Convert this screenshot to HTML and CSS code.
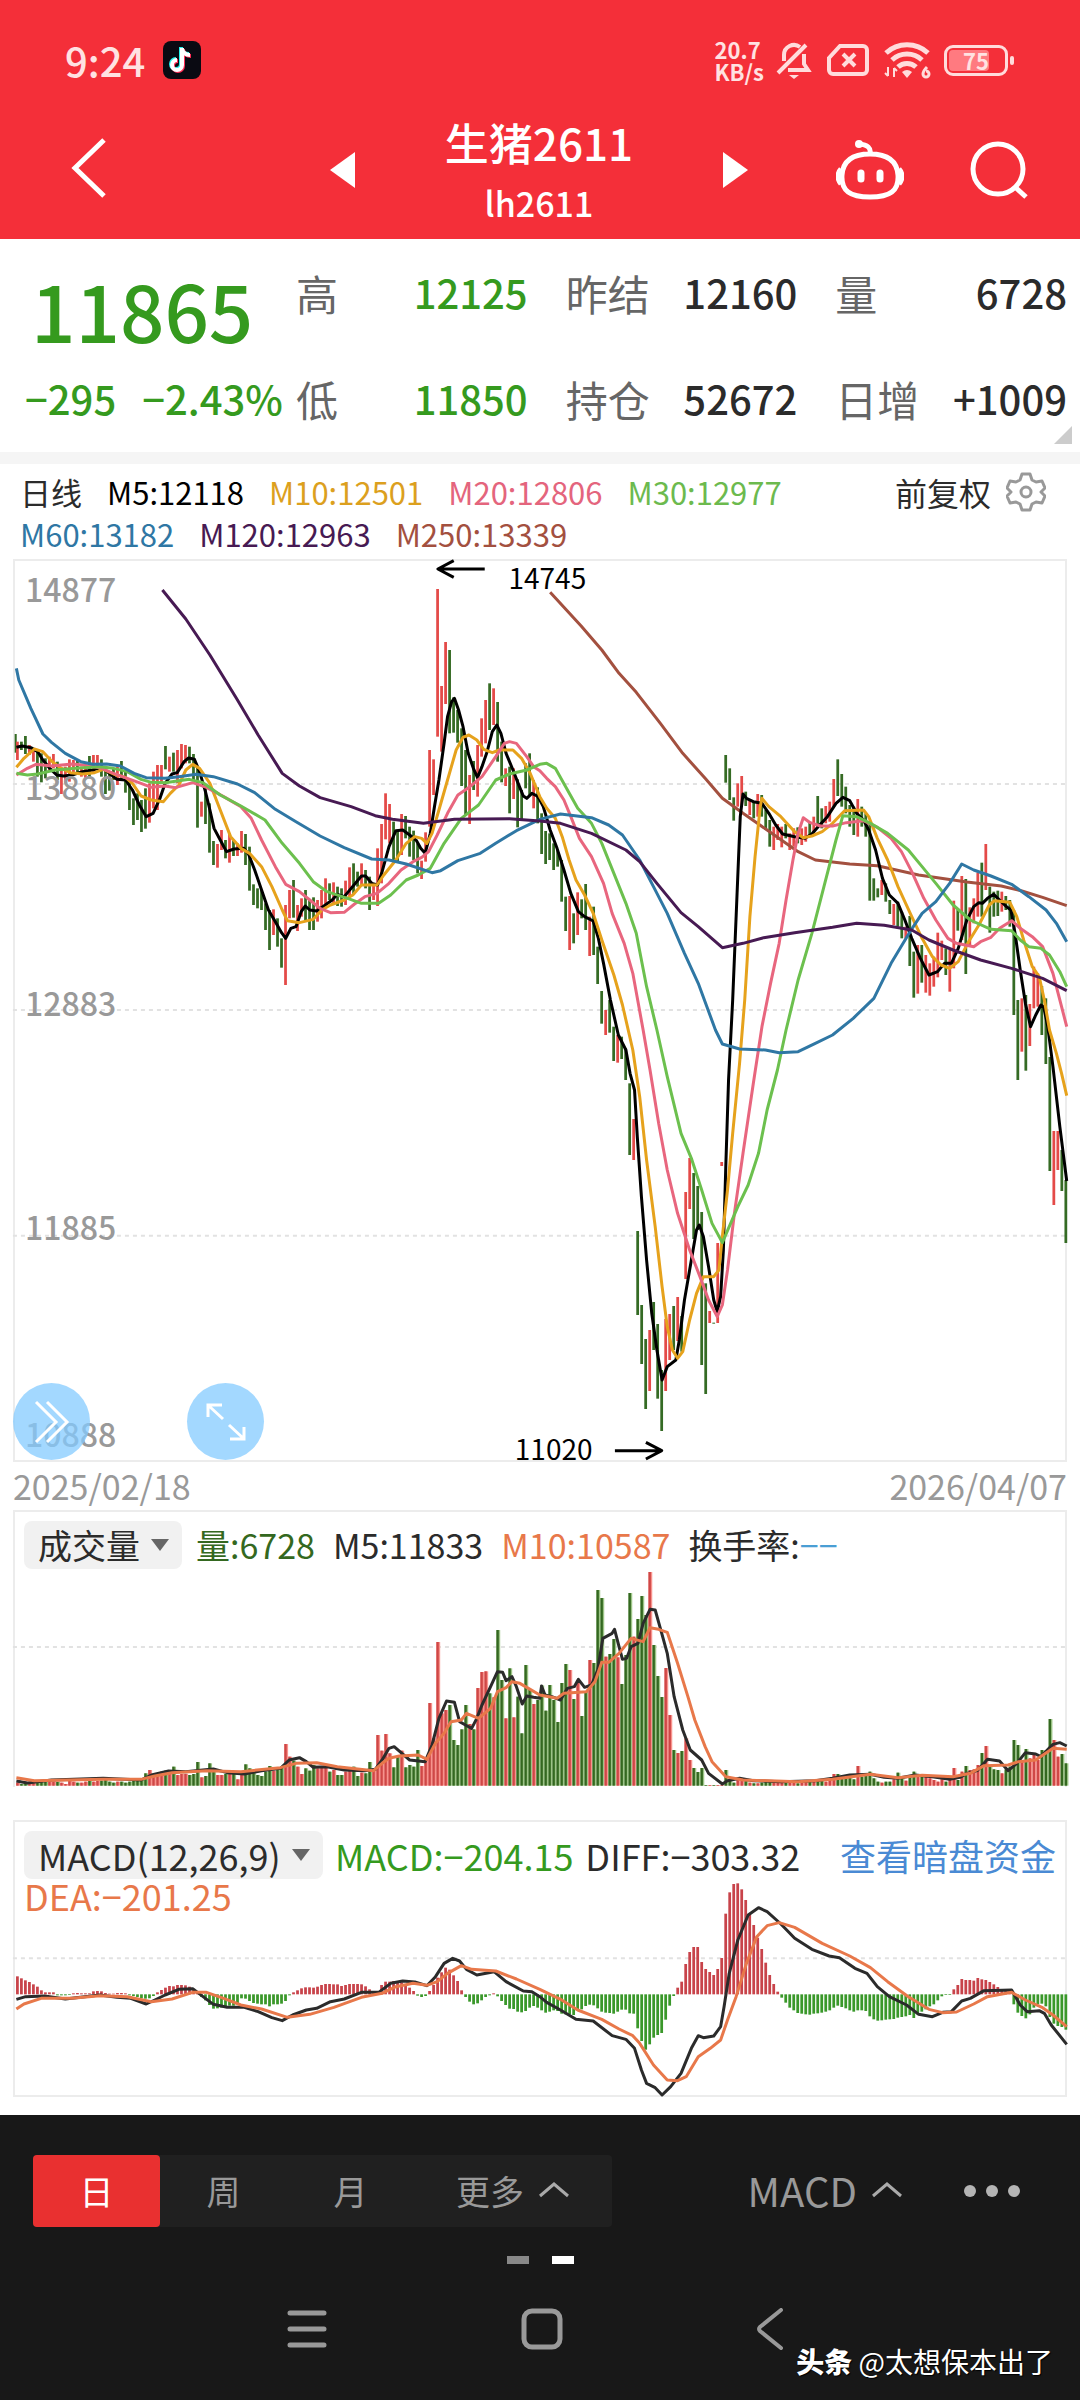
FILE: index.html
```html
<!DOCTYPE html>
<html lang="zh-CN">
<head>
<meta charset="utf-8">
<meta name="viewport" content="width=device-width, initial-scale=1">
<title>生猪2611</title>
<link rel="stylesheet" href="styles.css">
</head>
<body>
<header class="top">
  <div class="status">
    <span class="clock">9:24</span>
    <svg class="app-icon" width="38" height="38" viewBox="0 0 38 38" aria-hidden="true">
      <rect width="38" height="38" rx="8" fill="#0a0a12"/>
      <g fill="none" stroke-width="4">
        <path d="M19 7v17a5 5 0 1 1-5-5M19 8c1 4 4 6 8 6" stroke="#25f4ee" transform="translate(-1 -1)"/>
        <path d="M19 7v17a5 5 0 1 1-5-5M19 8c1 4 4 6 8 6" stroke="#fe2c55" transform="translate(1 1)"/>
        <path d="M19 7v17a5 5 0 1 1-5-5M19 8c1 4 4 6 8 6" stroke="#fff"/>
      </g>
    </svg>
    <span class="speed"><span>20.7</span><span>KB/s</span></span>
    <svg class="st-bell" width="36" height="38" viewBox="0 0 36 38" fill="none" stroke="#ffdcdc" stroke-width="4" aria-hidden="true">
      <path d="M8 20V14a10 10 0 0 1 16-8M28 13v10l4 6H12M30 4 2 32"/><path d="M13 34h10l-5 4z" fill="#ffdcdc" stroke="none"/>
    </svg>
    <svg class="st-sim" width="42" height="32" viewBox="0 0 42 32" fill="none" stroke="#ffdcdc" stroke-width="4" aria-hidden="true">
      <path d="M13 2h23a4 4 0 0 1 4 4v20a4 4 0 0 1-4 4H6a4 4 0 0 1-4-4V14z"/><path d="m16 10 12 12m0-12L16 22"/>
    </svg>
    <svg class="st-wifi" width="48" height="38" viewBox="0 0 48 38" fill="none" stroke="#ffdcdc" stroke-width="5" aria-hidden="true">
      <path d="M2 12a31 31 0 0 1 42 0M8 19a22 22 0 0 1 30 0M14 26a13 13 0 0 1 18 0"/><path d="m23 37-5-6q5-4 10 0z" fill="#ffdcdc" stroke="none"/>
      <path d="M4 26v9m-3-3 3 3M10 36v-9m3 3-3-3" stroke-width="2"/><path d="M43 26q-4 4-4 7a3 3 0 1 0 3-3" stroke-width="3"/>
    </svg>
    <span class="battery"><i class="battery-fill"></i><b class="battery-num">75</b></span>
  </div>
  <div class="nav">
    <button class="icon-btn back" aria-label="返回"><svg width="36" height="62" viewBox="0 0 36 62" fill="none" stroke="#fff" stroke-width="5"><path d="M33 3 4 31l29 28"/></svg></button>
    <button class="icon-btn prev" aria-label="上一个"><svg width="25" height="36" viewBox="0 0 25 36"><path d="M25 0v36L0 18z" fill="#fff"/></svg></button>
    <h1 class="title">生猪2611<small>lh2611</small></h1>
    <button class="icon-btn next" aria-label="下一个"><svg width="25" height="36" viewBox="0 0 25 36"><path d="M0 0v36l25-18z" fill="#fff"/></svg></button>
    <button class="icon-btn robot" aria-label="智能助手"><svg width="68" height="62" viewBox="0 0 68 62" fill="none" stroke="#fff" stroke-width="5">
      <path d="M34 15C52 15 61 22 62 36 63 52 54 58 34 58S5 52 6 36C7 22 16 15 34 15zM5 30q-6 7 0 15M63 30q6 7 0 15M34 15q2-9-11-10"/><circle cx="23" cy="5" r="4" fill="#fff" stroke="none"/><path d="M25 34v6M44 34v6" stroke-width="7" stroke-linecap="round"/></svg></button>
    <button class="icon-btn search" aria-label="搜索"><svg width="58" height="60" viewBox="0 0 58 60" fill="none" stroke="#fff" stroke-width="5"><circle cx="28" cy="29" r="25"/><path d="m45 47 11 10"/></svg></button>
  </div>
</header>

<main>
  <section class="quote">
    <div class="last">
      <strong class="price">11865</strong>
      <div class="change"><span>−295</span><span>−2.43%</span></div>
    </div>
    <dl class="stats">
      <div><dt>高</dt><dd class="down">12125</dd></div>
      <div><dt>昨结</dt><dd>12160</dd></div>
      <div><dt>量</dt><dd>6728</dd></div>
      <div><dt>低</dt><dd class="down">11850</dd></div>
      <div><dt>持仓</dt><dd>52672</dd></div>
      <div><dt>日增</dt><dd>+1009</dd></div>
    </dl>
    <i class="corner"></i>
  </section>

  <section class="legend">
    <div class="averages">
      <span class="c-day">日线</span><span class="c-m5">M5:12118</span><span class="c-m10">M10:12501</span><span class="c-m20">M20:12806</span><span class="c-m30">M30:12977</span>
      <span class="c-m60">M60:13182</span><span class="c-m120">M120:12963</span><span class="c-m250">M250:13339</span>
    </div>
    <button class="adjust">前复权
      <svg width="40" height="40" viewBox="0 0 40 40" fill="none" stroke="#999" stroke-width="3" stroke-linejoin="round"><path d="M16 2h8l2 6 4 2 6-1 3 7-4 4 4 4-3 7-6-1-4 2-2 6h-8l-2-6-4-2-6 1-3-7 4-4-4-4 3-7 6 1 4-2z"/><circle cx="20" cy="20" r="5"/></svg>
    </button>
  </section>

  <section class="box kline">
    <ul class="axis"><li>14877</li><li>13880</li><li>12883</li><li>11885</li><li>10888</li></ul>
    <svg id="kline" class="plot" viewBox="44 33 3049 2697" preserveAspectRatio="none" role="img" aria-label="日K线"></svg>
    <span class="mark high">14745</span>
    <span class="mark low">11020</span>
    <button class="round forward" aria-label="快进"><svg width="36" height="46" viewBox="0 0 36 46" fill="none" stroke="#fff" stroke-width="3"><path d="m2 3 20 20L2 43M13 3l20 20-20 20"/></svg></button>
    <button class="round expand" aria-label="全屏"><svg width="40" height="40" viewBox="0 0 40 40" fill="none" stroke="#fff" stroke-width="3"><path d="M2 15V3h14M3 4l14 13M38 25v12H24M37 36 23 23"/></svg></button>
  </section>
  <div class="dates"><time>2025/02/18</time><time>2026/04/07</time></div>

  <section class="box volume">
    <svg id="volume" class="plot" viewBox="44 36 3049 825" preserveAspectRatio="none" role="img" aria-label="成交量图"></svg>
    <div class="readout">
      <label class="picker"><select aria-label="副图指标一"><option>成交量</option></select></label>
      <span class="c-vol">量:6728</span><span class="c-dark">M5:11833</span><span class="c-orange">M10:10587</span><span class="c-dark">换手率:<em>−−</em></span>
    </div>
  </section>

  <section class="box macd">
    <svg id="macd" class="plot" viewBox="44 66 3049 819" preserveAspectRatio="none" role="img" aria-label="MACD图"></svg>
    <div class="readout">
      <label class="picker"><select aria-label="副图指标二"><option>MACD(12,26,9)</option></select></label>
      <span class="c-green">MACD:−204.15</span><span class="c-dark">DIFF:−303.32</span>
      <a class="funds" href="#funds">查看暗盘资金</a>
      <span class="c-orange dea">DEA:−201.25</span>
    </div>
  </section>
</main>

<footer class="bottom">
  <div class="tools">
    <div class="tabs">
      <button class="tab active">日</button><button class="tab">周</button><button class="tab">月</button>
      <button class="tab more">更多<svg width="32" height="16" viewBox="0 0 32 16" fill="none" stroke="#aaa" stroke-width="3"><path d="M2 14 16 2l14 12"/></svg></button>
    </div>
    <button class="indicator">MACD<svg width="32" height="16" viewBox="0 0 32 16" fill="none" stroke="#aaa" stroke-width="3"><path d="M2 14 16 2l14 12"/></svg></button>
    <button class="dots" aria-label="更多操作"><i></i><i></i><i></i></button>
  </div>
  <div class="pager"><i></i><i class="on"></i></div>
  <nav class="system">
    <button aria-label="最近任务"><svg width="40" height="42" viewBox="0 0 40 42" stroke="#999" stroke-width="5" stroke-linecap="round"><path d="M3 5h34M3 21h34M3 37h34"/></svg></button>
    <button aria-label="主页"><svg width="42" height="42" viewBox="0 0 42 42" fill="none" stroke="#999" stroke-width="5"><rect x="3" y="3" width="36" height="36" rx="8"/></svg></button>
    <button aria-label="后退"><svg width="28" height="42" viewBox="0 0 28 42" fill="none" stroke="#999" stroke-width="4" stroke-linecap="round"><path d="M25 2 4 19q-2 2 0 4l21 17"/></svg></button>
  </nav>
  <p class="credit"><b>头条</b> @太想保本出了</p>
</footer>
<script src="charts.js"></script>
</body>
</html>
```
FILE: styles.css
```css
* { box-sizing: border-box; }
body { margin: 0; background: #fff; color: #2b2b2b; font-family: "Noto Sans CJK SC", Roboto, sans-serif; font-weight: 500; }
button { border: 0; padding: 0; background: none; font: inherit; color: inherit; cursor: pointer; }
svg { display: block; }
ul, dl, dd, p { margin: 0; padding: 0; list-style: none; }

.top { background: #f42f39; color: #fff; padding-top: 38px; height: 239px; }
.status { display: flex; align-items: center; height: 44px; padding: 0 72px 0 65px; color: #ffe2e2; }
.clock { font-size: 40px; line-height: 44px; }
.app-icon { margin-left: 18px; }
.speed { display: grid; margin-left: auto; margin-right: 12px; font-size: 22px; line-height: 22px; font-weight: 700; }
.speed span { height: 22px; }
.st-bell { margin-right: 15px; }
.st-sim { margin-right: 15px; }
.st-wifi { margin-right: 12px; }
.battery { position: relative; width: 64px; height: 31px; border: 3px solid #ffdcdc; border-radius: 9px; display: grid; place-items: center; }
.battery::after { content: ""; position: absolute; right: -9px; top: 8px; width: 4px; height: 9px; border-radius: 2px; background: #ffdcdc; }
.battery-fill { position: absolute; inset: 2px 16px 2px 2px; background: #ff7a80; border-radius: 4px; }
.battery-num { position: relative; font-size: 22px; line-height: 24px; font-weight: 700; }
.nav { display: flex; align-items: center; height: 157px; padding: 22px 52px 0 71px; }
.nav .title, .nav .icon-btn { flex: none; }
.back { margin-right: auto; }
.icon-btn.back { padding-bottom: 8px; }
.prev, .next { padding-bottom: 4px; }
.title { width: 368px; margin: -4px 0 0; text-align: center; font-size: 44px; line-height: 66px; font-weight: 500; }
.title small { display: block; font-size: 34px; line-height: 56px; }
.robot { margin-left: 88px; }
.search { margin-left: 66px; }
.robot, .search { padding-bottom: 4px; }

.quote { position: relative; display: flex; height: 225px; border-bottom: 12px solid #f5f5f5; padding-right: 13px; }
.last { width: 296px; padding-left: 25px; color: #359a1e; white-space: nowrap; }
.price { display: block; margin-left: 6px; font-size: 78px; line-height: 140px; font-weight: 500; }
.change { display: flex; gap: 26px; font-size: 40px; line-height: 38px; }
.stats { flex: 1; display: grid; grid-template-columns: repeat(3, 1fr); grid-auto-rows: 106px; column-gap: 38px; }
.stats div { display: flex; justify-content: space-between; align-items: center; white-space: nowrap; }
.stats dt { font-size: 42px; font-weight: 400; color: #666; }
.stats dd { font-size: 40px; }
.stats .down { color: #359a1e; }
.corner { position: absolute; right: 8px; bottom: 8px; border: 9px solid transparent; border-right-color: #ccc; border-bottom-color: #ccc; }

.legend { display: flex; justify-content: space-between; align-items: flex-start; padding: 7px 34px 4px 20px; }
.averages { display: flex; flex-wrap: wrap; column-gap: 25px; flex: 0 1 800px; font-size: 31px; line-height: 42px; font-weight: 400; }
.c-m5 { color: #000; }
.c-m10 { color: #dca01e; }
.c-m20 { color: #e4657d; }
.c-m30 { color: #6cba4e; }
.c-m60 { color: #2f77a4; }
.c-m120 { color: #471a53; }
.c-m250 { color: #a3503f; }
.adjust { display: flex; align-items: center; gap: 15px; font-size: 32px; line-height: 42px; font-weight: 400; }

.box { position: relative; margin: 0 13px; border: 2px solid #ececec; display: grid; grid-template-rows: minmax(0, 1fr); }
.box > .plot, .box > .readout { grid-area: 1 / 1; }
.plot { width: 100%; height: 100%; min-height: 0; overflow: visible; }
.kline { height: 903px; }
.axis li { position: absolute; left: 10px; transform: translateY(-50%); font-size: 32px; line-height: 36px; color: #999; }
.axis li:nth-child(1) { top: 3%; }
.axis li:nth-child(2) { top: 25%; }
.axis li:nth-child(3) { top: 49%; }
.axis li:nth-child(4) { top: 74%; }
.axis li:nth-child(5) { top: 97%; }
.mark { position: absolute; font-size: 28px; line-height: 32px; font-weight: 400; color: #000; }
.high { left: 47%; top: 0; }
.low { right: 45%; bottom: -4px; }
.round { position: absolute; bottom: 0; width: 77px; height: 77px; border-radius: 50%; background: rgba(132, 203, 255, .75); display: grid; place-items: center; }
.forward { left: -2px; }
.expand { left: 172px; }
.dates { display: flex; justify-content: space-between; padding: 0 13px; font-size: 34px; line-height: 48px; color: #999; font-weight: 400; }

.volume { height: 277px; border-bottom: 0; margin-bottom: 33px; }
.macd { height: 277px; margin-bottom: 18px; }
.readout { position: relative; display: flex; flex-wrap: wrap; align-items: center; align-content: flex-start; padding: 9px 9px 0; font-size: 34px; line-height: 48px; font-weight: 400; column-gap: 18px; white-space: nowrap; }
.macd .readout { font-size: 36px; column-gap: 12px; }
.picker { position: relative; margin-right: -4px; }
.macd .picker { margin-right: 0; }
.picker::after { content: ""; position: absolute; right: 13px; top: 18px; border: 9px solid transparent; border-top: 12px solid #666; border-bottom: 0; pointer-events: none; }
.picker select { display: block; appearance: none; border: 0; border-radius: 8px; background: #f1f1f1; padding: 0 42px 0 14px; height: 48px; font: inherit; line-height: 48px; color: #2b2b2b; }
.c-vol { color: #346820; }
.c-dark { color: #2b2b2b; }
.c-dark em { color: #4a9ed4; font-style: normal; }
.c-orange { color: #e8784a; }
.c-green { color: #359a1e; }
.funds { margin-left: auto; color: #4a8ad4; text-decoration: none; }
.dea { flex-basis: 100%; line-height: 32px; }

.bottom { position: relative; background: #181818; color: #999; min-height: 285px; padding-top: 40px; }
.tools { display: flex; align-items: center; height: 72px; padding: 0 60px 0 33px; font-weight: 400; }
.tabs { display: flex; height: 72px; width: 579px; background: #202020; border-radius: 4px; font-size: 34px; }
.tab { width: 127px; padding-bottom: 2px; }
.tab.active { background: #e93030; color: #fff; border-radius: 4px; }
.more, .indicator { display: flex; align-items: center; justify-content: center; gap: 14px; }
.tab.more { flex: 1; }
.indicator { margin-left: auto; padding-bottom: 2px; font-size: 40px; }
.dots { display: flex; gap: 10px; margin-left: 61px; }
.dots i { width: 12px; height: 12px; border-radius: 50%; background: #b4b4b4; }
.pager { display: flex; justify-content: center; gap: 23px; padding-top: 29px; }
.pager i { width: 22px; height: 8px; background: #888; }
.pager .on { background: #fff; }
.system { display: flex; justify-content: space-between; padding: 44px 296px 0 287px; }
.credit { position: absolute; right: 27px; bottom: 20px; font-size: 28px; line-height: 38px; font-weight: 400; color: #fff; text-shadow: 1px 1px 1px #000; }
.credit b { font-weight: 900; }
```
FILE: charts.js
```js
const NS = "http://www.w3.org/2000/svg";
const STEP = 11.62;      // distance between two trading days
const FIRST = 51;        // centre of the first day
const HALF = 1568;       // x origin of the second half of every series
const x = i => FIRST + STEP * i;

// one entry per day: colour, top, bottom
const candles = `r575-630 g575-600 g558-612 r585-615 r595-635 g600-680 g610-697 g625-685 r620-660 r612-655
g635-690 r660-732 r650-700 r628-695 r630-675 g630-675 r650-680 r648-685 g618-680 r615-665
r615-660 g628-680 g655-732 g665-722 g655-690 r650-705 g633-690 g665-728 g690-780 g745-825
g730-810 g750-846 g715-836 r700-818 r665-775 r645-780 r645-700 g588-658 r620-665 g608-665
r600-700 r582-655 r585-640 g590-640 g612-690 g650-833 r755-800 g710-822 g760-908 g873-945
r882-953 r840-900 g870-925 r850-938 g870-918 r880-918 r843-908 g852-945 g890-1022 g1003-1065
g1015-1075 g1020-1080 g1060-1140 g1080-1200 r1078-1155 g1105-1190 g1165-1253 r1065-1305 r1020-1105 g990-1103
r1065-1143 r1045-1100 g1020-1115 g1048-1140 g1042-1140 r1050-1115 r1020-1105 r985-1070 g1000-1050 r997-1065
g1010-1068 g1015-1070 r992-1065 r952-1040 g940-1035 g965-1010 r940-1005 g960-1015 g980-1080 r1000-1050
r895-1068 r822-1000 r730-868 r762-880 g815-930 g845-935 r792-915 g798-865 g830-920 g842-930
g880-970 r932-987 r847-935 r600-830 r628-735 r117-560 r408-605 r276-462 g300-550 g442-548
g480-578 g535-708 g600-798 r675-822 g633-720 r585-740 r505-620 r450-580 g400-540 r415-525
g456-635 g575-697 r655-708 g650-790 r655-747 g688-832 g720-810 g640-715 g610-735 r690-775
g712-820 g790-912 g843-942 g850-930 g880-960 g900-950 g930-1055 g1040-1143 r1038-1200 g1090-1180
r1027-1155 g1048-1105 g1002-1140 r1100-1218 g1070-1215 g1190-1302 g1323-1421 r1380-1455 g1350-1448 g1430-1533
r1455-1538 g1460-1527 g1495-1590 g1600-1815 r1707-1830 g2043-2295 g2265-2442 g2367-2577 r2340-2523 g2256-2400
g2322-2546 g2460-2643 r2307-2523 r2292-2430 g2268-2400 r2241-2373 g2298-2405 r1926-2187 r1824-1977 g1869-2067
g1908-2040 g1986-2445 g2200-2532 r2283-2319 g2318-2321 r2079-2319 r1836-1848 g615-698 g655-750 g742-812
r700-770 r678-765 g725-768 r750-795 g755-805 r732-800 g735-800 g780-840 g810-890 r830-900
r822-870 r830-892 g822-865 r850-900 r835-890 g832-880 r835-885 r830-875 g815-860 r800-850
g738-830 g775-835 r768-820 r755-815 r687-770 g628-738 g672-770 g710-790 g765-830 g770-855
r747-860 g770-830 g790-860 g820-1052 g985-1052 g1015-1042 r990-1035 g1000-1055 g1050-1092 r1062-1125
g1055-1130 g1085-1165 r1130-1165 g1098-1248 g1205-1343 r1185-1331 g1185-1298 r1215-1328 r1240-1337 r1220-1310
r1148-1282 r1172-1230 g1195-1275 r1200-1325 r1052-1255 g1078-1142 r978-1170 g987-1272 r1072-1190 r1045-1120
r968-1100 g938-1100 r882-1020 g1010-1148 g1025-1100 g1022-1098 r1025-1085 g1038-1080 g1050-1130 g1080-1395
g1350-1590 r1345-1505 g1335-1562 r1362-1488 r1250-1375 r1270-1370 g1308-1455 g1345-1542 g1521-1863 r1743-1965
r1743-1860 g1800-1923 g1890-2079`.split(/\s+/).map(s => {
  const [top, bottom] = s.slice(1).split("-").map(Number);
  return { up: s[0] === "r", top, bottom };
});

const volumes = `848 852 850 850 848 848 845 846 843 845 846 848 852 842 845 848 848 845 843 845 843 842 840 845 848 845 845 848 845 842
842 840 820 810 825 820 815 812 820 800 825 822 822 825 822 786 832 828 790 812 825 825 822 820 818 838 822 793 805 815
825 828 815 798 812 808 800 732 770 782 800 822 805 812 795 805 800 803 815 810 825 825 815 802 800 828 818 820 786 810
705 752 702 760 802 770 752 802 795 800 750 798 780 609 715 426 640 630 615 720 735 688 615 672 688 564 516 514 580 592
390 540 655 505 652 590 700 495 570 612 600 556 632 555 600 666 549 492 510 597 540 648 575 480 489 270 294 470 462 417
472 552 465 279 410 357 288 345 216 435 528 591 504 645 750 759 753 715 780 804 816 804 855 855 855 855 855 810 840 848
840 840 843 848 850 850 848 845 845 845 845 845 847 849 848 850 848 846 845 843 843 842 845 840 822 822 830 825 828 838
798 830 828 815 835 845 848 845 845 838 818 830 842 828 815 828 828 828 835 840 845 838 845 838 804 840 815 798 810 808
795 759 738 800 808 810 820 808 800 720 735 780 747 775 765 780 750 752 657 720 770 762 790`.split(/\s+/).map(Number);

const histogram = `54 48 42 37 30 23 12 6 6 6 -3 -3 -3 -2 3 4 3 3 3 9 10 9 4 2 2 4 4 3 -3 -5
-8 -12 -13 -12 -5 6 13 20 25 24 28 28 27 23 16 5 -8 -18 -32 -43 -42 -40 -36 -34 -34 -28 -12 -13 -20 -26
-28 -30 -30 -36 -30 -30 -28 -20 -3 6 12 18 21 21 20 23 28 31 31 30 30 25 28 31 31 31 30 24 15 6
10 28 38 38 40 36 36 26 20 10 -4 -8 -5 10 28 50 66 80 74 57 40 12 -8 -22 -30 -27 -18 -8 -3 3
-6 -20 -32 -43 -44 -52 -54 -50 -40 -35 -40 -48 -55 -52 -48 -50 -58 -60 -60 -62 -48 -45 -35 -31 -33 -42 -52 -55 -56 -58
-52 -46 -46 -57 -58 -102 -140 -166 -150 -130 -122 -116 -76 -34 -5 20 38 91 127 142 142 97 76 67 58 76 109 242 306 331
333 315 283 240 208 170 136 95 58 31 8 -10 -25 -40 -48 -56 -58 -60 -61 -58 -57 -55 -52 -48 -40 -34 -38 -42 -48 -52
-48 -48 -50 -66 -75 -79 -78 -76 -75 -74 -70 -68 -66 -62 -71 -60 -52 -45 -36 -30 -18 -6 -2 -2 15 28 46 43 43 41
49 45 43 37 30 22 14 14 10 -30 -55 -65 -72 -60 -40 -30 -28 -36 -68 -88 -95 -98 -106`.split(/\s+/).map(Number);

const priceLines = [
  ["#a3503f", "", "30,127 120,228 180,300 230,370 280,427 350,520 415,610 480,685 530,745 590,790 660,840 750,905 800,930 900,942 980,947 1100,975 1240,996 1340,1008 1400,1023 1460,1042 1530,1067"],
  ["#000", "48,592 65,588 90,593 110,605 125,630 145,655 165,675 185,678 210,675 240,665 270,660 295,652 315,668 340,688 365,690 385,720 405,765 425,800 445,790 465,745 480,700 500,672 515,668 535,635 548,624 565,628 580,665 597,725 610,780 622,835 640,870 658,905 680,897 708,895 722,912 740,960 760,1020 780,1080 800,1115 818,1148 830,1165 845,1135 860,1130 875,1085 887,1068 900,1080 920,1083 945,1065 965,1050 980,1033 1000,1040 1020,1015 1050,978 1062,978 1080,1000 1097,1005 1110,965 1130,890 1150,842 1170,840 1190,855 1210,872 1222,895 1235,910 1250,850 1262,770 1275,690 1290,580 1300,500 1312,455 1320,445 1332,480 1345,530 1360,610 1375,655 1387,683 1400,650 1415,605 1430,545 1443,525 1455,550 1470,610 1490,660 1505,700 1520,738 1530,745 1545,730 1560,738 1568,750",
   "10,770 30,840 50,895 70,960 90,1030 112,1085 130,1100 155,1113 170,1165 185,1240 205,1350 228,1455 250,1500 262,1570 275,1620 283,1760 295,1940 310,2130 325,2290 340,2400 355,2490 370,2450 395,2430 405,2370 420,2250 440,2130 455,2040 463,2025 475,2060 490,2150 505,2250 515,2285 525,2240 533,2100 540,1850 548,1590 560,1350 572,1050 582,800 590,732 600,745 620,755 645,760 665,790 685,825 705,852 740,860 770,865 790,852 810,828 835,800 860,760 880,742 900,752 920,790 940,810 955,840 975,900 995,985 1015,1035 1040,1060 1060,1110 1080,1165 1105,1225 1130,1275 1155,1265 1175,1240 1195,1240 1215,1195 1240,1110 1260,1070 1275,1058 1285,1060 1300,1045 1318,1033 1335,1050 1355,1070 1368,1080 1380,1150 1395,1260 1410,1360 1425,1430 1440,1395 1455,1365 1463,1370 1475,1430 1490,1550 1510,1730 1530,1893"],
  ["#e6a21c", "48,652 70,625 100,597 125,605 150,633 175,653 205,668 240,672 275,668 300,658 330,672 365,682 385,700 410,738 440,750 475,755 495,730 520,705 540,660 560,643 580,655 610,700 640,780 670,860 700,895 725,910 760,950 790,1010 820,1080 835,1112 870,1118 910,1108 935,1080 960,1065 1000,1050 1025,1035 1050,1005 1095,1005 1115,975 1150,930 1180,880 1205,860 1225,865 1240,880 1255,850 1275,780 1300,690 1325,600 1345,562 1362,555 1385,570 1405,598 1430,608 1450,600 1490,600 1515,625 1540,670 1568,740",
   "20,775 45,805 65,860 85,930 105,990 130,1035 155,1090 180,1170 215,1275 240,1365 270,1500 290,1640 310,1830 335,2030 355,2210 370,2330 385,2400 400,2425 415,2405 435,2310 455,2230 475,2180 505,2180 520,2160 530,2060 545,1920 560,1750 580,1540 595,1350 610,1100 625,920 640,770 645,745 665,770 700,800 740,845 765,863 790,858 820,845 850,820 885,782 940,780 955,800 980,865 1010,930 1040,1010 1080,1100 1110,1165 1140,1220 1165,1245 1190,1255 1215,1235 1245,1175 1275,1125 1305,1065 1320,1052 1365,1057 1385,1100 1405,1170 1430,1250 1450,1280 1465,1350 1480,1440 1500,1510 1515,1570 1530,1637"],
  ["#e8667e", "48,675 80,655 105,643 150,648 210,642 240,645 290,653 330,670 370,685 410,700 440,712 480,708 510,713 560,698 600,712 650,740 700,770 730,805 760,870 800,950 830,1003 870,1025 900,1050 930,1075 960,1088 1000,1087 1030,1062 1060,1040 1095,1030 1130,1000 1165,960 1200,935 1225,922 1245,905 1270,855 1300,790 1330,735 1365,710 1400,680 1440,620 1465,580 1480,575 1500,580 1530,620 1550,650 1568,662",
   "20,685 45,710 70,750 90,800 115,865 150,920 185,1000 210,1090 245,1180 270,1270 300,1440 320,1560 345,1720 370,1860 400,1990 435,2100 465,2180 490,2250 515,2300 530,2265 545,2160 565,1990 590,1810 620,1600 645,1430 670,1300 695,1180 715,1050 735,930 750,850 765,803 785,818 815,828 850,828 890,818 940,812 980,832 1020,865 1050,905 1080,965 1115,1045 1150,1110 1185,1165 1210,1180 1260,1190 1280,1175 1310,1162 1335,1135 1370,1112 1395,1135 1430,1160 1460,1190 1490,1270 1515,1370 1530,1430"],
  ["#6cc04e", "48,670 80,675 110,672 160,660 220,655 290,650 330,655 370,665 410,688 440,697 480,698 550,688 590,698 640,735 700,768 770,810 820,880 870,940 910,995 950,1025 1010,1045 1050,1060 1100,1060 1135,1035 1180,990 1215,975 1250,955 1290,880 1340,805 1390,765 1440,690 1480,672 1530,660 1568,643",
   "20,640 45,655 75,710 110,775 150,820 180,880 215,970 250,1060 280,1150 310,1310 340,1440 370,1580 410,1750 440,1825 470,1920 500,2020 530,2078 550,2030 575,1970 605,1905 635,1810 660,1680 690,1560 715,1440 750,1290 790,1150 825,1010 860,870 880,797 920,800 960,820 1010,850 1070,900 1110,950 1150,1000 1200,1065 1250,1110 1310,1138 1370,1142 1395,1170 1420,1190 1455,1195 1480,1215 1510,1265 1530,1310"],
  ["#2f77a4", "48,355 55,390 90,475 125,552 150,577 190,610 235,635 270,643 310,642 350,648 390,670 425,683 480,685 520,680 570,673 620,680 690,702 740,728 800,778 860,815 930,858 1000,893 1080,927 1130,930 1180,942 1255,968 1280,962 1330,932 1395,910 1440,880 1500,842 1568,808",
   "60,792 150,803 200,825 240,855 290,930 330,1010 370,1090 420,1210 460,1300 510,1440 530,1482 580,1497 655,1500 695,1508 750,1505 800,1480 850,1455 910,1405 970,1345 1020,1240 1075,1145 1110,1090 1150,1055 1190,1000 1225,942 1260,960 1310,978 1370,1003 1420,1040 1470,1080 1500,1120 1530,1175"],
  ["#471a53", "472,120 540,207 610,315 690,450 750,555 820,670 870,708 930,743 1020,770 1090,797 1140,808 1230,820 1320,808 1480,806 1568,813",
   "60,820 150,850 250,900 290,935 340,1000 410,1088 460,1130 530,1193 590,1180 650,1163 740,1148 850,1132 920,1120 1000,1126 1080,1140 1130,1170 1200,1200 1280,1230 1370,1255 1460,1285 1530,1322"]
];
const volumeLines = [
  ["#2b2b2b", "48,843 80,849 150,840 300,835 410,840 440,825 490,813 540,815 590,810 620,807 660,818 710,822 760,812 815,805 840,780 870,773 890,785 910,802 950,800 1000,810 1060,812 1090,808 1110,780 1130,745 1145,740 1165,758 1190,780 1235,785 1255,735 1275,655 1297,603 1320,607 1335,665 1352,675 1370,685 1385,655 1400,615 1425,560 1445,515 1460,517 1470,542 1487,530 1500,560 1517,612 1530,588 1550,592 1568,595",
   "5,558 15,585 35,590 60,600 80,565 100,560 112,538 130,562 150,555 168,510 183,415 210,400 217,388 230,440 240,478 252,475 265,440 285,430 300,370 320,328 335,330 350,385 370,460 390,590 415,690 437,750 470,780 490,820 530,852 545,842 580,835 620,842 700,845 800,842 850,835 900,825 960,823 1000,832 1040,835 1090,825 1140,830 1190,838 1220,832 1240,820 1270,812 1300,778 1335,783 1360,812 1385,790 1410,758 1440,762 1455,770 1490,733 1510,728 1530,738"],
  ["#e8784a", "48,833 100,842 200,840 300,838 410,838 450,828 500,818 600,812 700,815 815,803 860,790 920,788 980,800 1085,812 1110,790 1130,775 1160,768 1215,765 1240,778 1265,730 1290,700 1310,665 1340,660 1355,640 1390,655 1425,625 1445,575 1470,563 1487,545 1510,550 1530,562 1568,585",
   "50,595 70,580 135,575 160,545 180,487 200,487 230,460 265,415 300,425 320,383 345,388 370,397 400,490 430,590 450,660 480,740 500,785 540,830 590,840 750,845 850,838 960,823 1040,833 1110,826 1200,830 1250,820 1290,797 1360,795 1390,785 1440,780 1490,745 1530,748"]
];
const macdLines = [
  ["#2b2b2b", "48,598 75,590 130,588 190,597 290,585 340,592 380,595 425,612 450,600 480,585 520,568 560,566 590,590 620,613 660,622 710,622 750,635 790,653 820,662 850,645 890,630 920,625 960,605 1000,597 1050,577 1100,577 1135,550 1170,543 1205,546 1240,557 1265,530 1290,490 1315,475 1335,483 1355,508 1385,525 1435,515 1470,545 1520,573 1545,575 1568,590",
   "20,607 60,630 105,658 155,663 210,707 250,718 275,745 295,810 310,850 335,863 355,885 380,860 410,820 440,745 460,707 475,713 505,708 525,680 535,620 550,520 575,420 605,345 635,323 660,335 700,372 740,415 790,448 840,468 870,473 915,505 950,520 980,560 1015,590 1065,615 1100,643 1140,650 1170,637 1195,635 1225,603 1250,595 1290,572 1370,570 1395,615 1415,635 1450,632 1465,640 1485,675 1530,733"],
  ["#e8784a", "48,627 70,612 120,595 210,595 290,587 370,590 440,605 500,597 560,577 600,577 650,595 700,615 760,627 835,652 900,643 970,622 1050,592 1110,580 1150,560 1200,550 1240,556 1270,545 1300,520 1340,497 1370,508 1440,513 1500,537 1568,568",
   "60,598 110,630 180,658 230,687 270,707 290,730 330,795 370,840 400,842 425,830 460,770 495,745 525,720 545,660 570,590 600,490 630,410 660,377 695,368 740,382 820,430 900,468 960,503 1010,545 1070,590 1130,628 1170,638 1210,636 1260,612 1300,590 1370,577 1410,600 1460,623 1490,645 1530,680"]
];

function add(svg, name, attrs) {
  const el = document.createElementNS(NS, name);
  for (const key in attrs) el.setAttribute(key, attrs[key]);
  svg.append(el);
}
function bar(svg, centre, top, bottom, width, fill) {
  add(svg, "rect", { x: centre - width / 2, y: top, width, height: Math.max(bottom - top, 2), fill });
}
// joins both halves of a series into one path
function curve(left, right) {
  const read = (s, dx) => s ? s.split(" ").map(p => p.split(",").map(Number)).map(([a, b]) => [a + dx, b]) : [];
  const pts = [...read(left, 0), ...read(right, HALF)];
  return "M" + pts.map(p => p.join(" ")).join("L");
}
function stroke(svg, d, color, width, dash) {
  add(svg, "path", { d, fill: "none", stroke: color, "stroke-width": width, "stroke-linejoin": "round",
    "vector-effect": "non-scaling-stroke", ...(dash ? { "stroke-dasharray": dash } : {}) });
}
const grid = (svg, y) => stroke(svg, `M38 ${y}H3098`, "#e2e2e2", 2, "4 4");

const kline = document.getElementById("kline");
[702, 1380, 2057].forEach(y => grid(kline, y));
bar(kline, 46, 552, 608, 6, "#356b24");
candles.forEach((c, i) => bar(kline, x(i), c.top, c.bottom, 8, c.up ? "#e44a48" : "#356b24"));
priceLines.forEach(([color, a, b]) => stroke(kline, curve(a, b), color, 3));
stroke(kline, "M1408 57H1272M1318 32L1272 57L1318 82", "#000", 3);
stroke(kline, "M1786 2702H1922M1876 2677L1922 2702L1876 2727", "#000", 3);

const volume = document.getElementById("volume");
grid(volume, 441);
volumes.forEach((top, i) => bar(volume, x(i) + 2, top, 857, 11, candles[i].up ? "#f8938d" : "#9cc486"));
volumes.forEach((top, i) => bar(volume, x(i), top, 857, 7, candles[i].up ? "#cf4746" : "#346820"));
volumeLines.forEach(([color, a, b]) => stroke(volume, curve(a, b), color, 3));

const macd = document.getElementById("macd");
grid(macd, 475);
histogram.forEach((v, i) => bar(macd, x(i), v > 0 ? 583 - v : 583, v > 0 ? 583 : 583 - v, 8, v > 0 ? "#c8434a" : "#3a982a"));
macdLines.forEach(([color, a, b]) => stroke(macd, curve(a, b), color, 3));
```
